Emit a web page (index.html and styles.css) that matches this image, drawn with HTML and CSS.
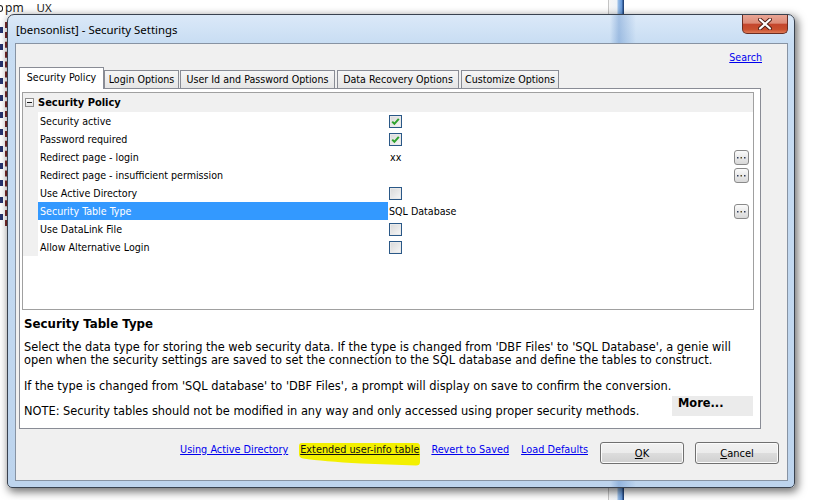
FILE: index.html
```html
<!DOCTYPE html>
<html>
<head>
<meta charset="utf-8">
<title>Security Settings</title>
<link rel="stylesheet" href="styles.css">
</head>
<body>
<div class="desk">
  <div class="bg-top"><span class="frag"></span><span class="pm">pm</span><span class="ux">UX</span></div>
  <div class="bg-left"></div>
  <div class="bg-bar bar-top"></div>
  <div class="bg-bar bar-bottom"></div>

  <div class="window">
    <div class="titlebar">
      <span class="title">[bensonlist] - Security Settings</span>
      <div class="close">
        <svg width="14" height="12" viewBox="0 0 14 12"><path d="M2 1.5 L12 10.5 M12 1.5 L2 10.5" stroke="#4a1a12" stroke-width="4" stroke-linecap="round"/><path d="M2 1.5 L12 10.5 M12 1.5 L2 10.5" stroke="#ffffff" stroke-width="2.2" stroke-linecap="round"/></svg>
      </div>
    </div>
    <div class="client">
      <div class="search-row"><a class="link">Search</a></div>
      <div class="tabs">
        <div class="tab active t1">Security Policy</div>
        <div class="tab t2">Login Options</div>
        <div class="tab t3">User Id and Password Options</div>
        <div class="tab t4">Data Recovery Options</div>
        <div class="tab t5">Customize Options</div>
      </div>
      <div class="panel">
        <div class="grid">
          <div class="cat"><span class="minus"></span><span class="cat-label">Security Policy</span></div>
          <div class="row"><div class="gutter"></div><div class="label">Security active</div><div class="value"><span class="cb"><svg width="11" height="11" viewBox="0 0 11 11"><path d="M2.2 5.6 L4.4 7.8 L8.8 2.8" stroke="#2ea22e" stroke-width="2" fill="none"/></svg></span></div></div>
          <div class="row"><div class="gutter"></div><div class="label">Password required</div><div class="value"><span class="cb"><svg width="11" height="11" viewBox="0 0 11 11"><path d="M2.2 5.6 L4.4 7.8 L8.8 2.8" stroke="#2ea22e" stroke-width="2" fill="none"/></svg></span></div></div>
          <div class="row"><div class="gutter"></div><div class="label">Redirect page - login</div><div class="value"><span class="val-text">xx</span><span class="ell"><svg width="9" height="3" viewBox="0 0 9 3"><rect x="0" y="1" width="1.5" height="1.5" fill="#2c3a5a"/><rect x="3.5" y="1" width="1.5" height="1.5" fill="#5a4a20"/><rect x="7" y="1" width="1.5" height="1.5" fill="#2c3a5a"/></svg></span></div></div>
          <div class="row"><div class="gutter"></div><div class="label">Redirect page - insufficient permission</div><div class="value"><span class="ell"><svg width="9" height="3" viewBox="0 0 9 3"><rect x="0" y="1" width="1.5" height="1.5" fill="#2c3a5a"/><rect x="3.5" y="1" width="1.5" height="1.5" fill="#5a4a20"/><rect x="7" y="1" width="1.5" height="1.5" fill="#2c3a5a"/></svg></span></div></div>
          <div class="row"><div class="gutter"></div><div class="label">Use Active Directory</div><div class="value"><span class="cb"></span></div></div>
          <div class="row"><div class="gutter"></div><div class="label sel">Security Table Type</div><div class="value"><span class="val-text sql">SQL Database</span><span class="ell"><svg width="9" height="3" viewBox="0 0 9 3"><rect x="0" y="1" width="1.5" height="1.5" fill="#2c3a5a"/><rect x="3.5" y="1" width="1.5" height="1.5" fill="#5a4a20"/><rect x="7" y="1" width="1.5" height="1.5" fill="#2c3a5a"/></svg></span></div></div>
          <div class="row"><div class="gutter"></div><div class="label">Use DataLink File</div><div class="value"><span class="cb"></span></div></div>
          <div class="row"><div class="gutter"></div><div class="label">Allow Alternative Login</div><div class="value"><span class="cb"></span></div></div>
        </div>
        <div class="desc">
          <h3 class="desc-title">Security Table Type</h3>
          <p class="p1">Select the data type for storing the web security data. If the type is changed from 'DBF Files' to 'SQL Database', a genie will<br>open when the security settings are saved to set the connection to the SQL database and define the tables to construct.</p>
          <p class="p2">If the type is changed from 'SQL database' to 'DBF Files', a prompt will display on save to confirm the conversion.</p>
          <div class="p3"><span class="note">NOTE: Security tables should not be modified in any way and only accessed using proper security methods.</span><span class="more">More...</span></div>
        </div>
      </div>
      <div class="footer">
        <div class="links">
          <a class="link">Using Active Directory</a>
          <a class="link hl"><svg class="marker" width="122" height="23" viewBox="0 0 122 23"><path d="M0 3 Q0 0 3 0 L118 0 Q121 0 121 4 L121 19 Q121 22.5 117 22.5 L62 20.5 Q24 18.5 4 15.5 Q0 14.8 0 11 Z" fill="#f3f000"/></svg><span class="hl-text">Extended user-info table</span></a>
          <a class="link">Revert to Saved</a>
          <a class="link">Load Defaults</a>
        </div>
        <button class="btn"><u>O</u>K</button>
        <button class="btn"><u>C</u>ancel</button>
      </div>
    </div>
  </div>
</div>
</body>
</html>
```

FILE: styles.css
```css
* { box-sizing: border-box; }

body {
  margin: 0;
  width: 817px;
  height: 500px;
  overflow: hidden;
  background: #ffffff;
  font-family: "DejaVu Sans Condensed", "Liberation Sans", sans-serif;
  font-size: 10.6px;
  color: #000;
}

.desk {
  position: relative;
  width: 817px;
  height: 500px;
  overflow: hidden;
  background: #fff;
}

/* background desktop fragments */
.bg-top {
  position: absolute;
  left: 0;
  top: 0;
  height: 15px;
  display: flex;
  align-items: center;
  font: 12px/14px "Noto Sans", sans-serif;
  color: #1c1c1c;
  white-space: nowrap;
}
.bg-top .frag {
  width: 3px;
  height: 7px;
  margin-top: 2px;
  border-radius: 0 3px 3px 0;
  border: 1.5px solid #1c1c1c;
  border-left: none;
}
.bg-top .pm { margin-left: 2px; }
.bg-top .ux { margin-left: 13px; font-size: 11.5px; }

.bg-left {
  position: absolute;
  left: 0;
  top: 22px;
  width: 7px;
  height: 204px;
  background: repeating-linear-gradient(180deg, transparent 0, transparent 5px, #26326e 5px, #26326e 11px, transparent 11px, transparent 17px);
  background-size: 3px 100%;
  background-repeat: no-repeat;
  border-right: 2px dashed #7a2a2a;
}

.bg-bar {
  position: absolute;
  left: 608px;
  width: 16px;
  background: linear-gradient(90deg, #c4c4c4 0, #c4c4c4 1px, #f6f6f6 1px, #eef3f8 9px, #9cc0e8 10px, #5f93d6 14px, #24467c 15px);
}
.bar-top { top: 0; height: 16px; }
.bar-bottom { top: 486px; height: 14px; }

/* window */
.window {
  position: absolute;
  left: 7px;
  top: 14px;
  width: 788px;
  height: 474px;
  border: 1px solid #39424f;
  border-radius: 7px 7px 5px 5px;
  padding: 0 6px 6px 7px;
  display: flex;
  flex-direction: column;
  background:
    linear-gradient(90deg, rgba(120,160,210,0) 602px, rgba(80,130,195,0.38) 611px, rgba(80,130,195,0.22) 618px, rgba(120,160,210,0) 628px),
    linear-gradient(180deg, #dbe9f8 0, #c8ddf3 28px, #bdd4ed 100%);
  box-shadow: 2px 3px 9px 1px rgba(0, 0, 0, 0.55);
}

.titlebar {
  height: 28px;
  display: flex;
  flex-shrink: 0;
}
.title {
  align-self: center;
  margin-left: 1px;
  font: 11.4px "Noto Sans", sans-serif;
  color: #000;
  white-space: nowrap;
}
.close {
  margin-left: auto;
  width: 46px;
  height: 19px;
  border: 1px solid #6a2d22;
  border-top: none;
  border-radius: 0 0 5px 5px;
  background: linear-gradient(180deg, #e9a595 0%, #dd8b77 45%, #c4462d 52%, #c9502f 80%, #df7a57 100%);
  display: flex;
  align-items: center;
  justify-content: center;
}

.client {
  height: 438px;
  background: #f0f0f0;
  border: 1px solid #8793a3;
  display: flex;
  flex-direction: column;
}

.search-row {
  height: 23px;
  padding: 7px 25px 0 0;
  display: flex;
  justify-content: flex-end;
  flex-shrink: 0;
}

.link {
  color: #0000ee;
  text-decoration: underline;
  line-height: 13px;
  white-space: nowrap;
}

/* tabs */
.tabs {
  height: 21px;
  display: flex;
  align-items: flex-end;
  flex-shrink: 0;
  position: relative;
  z-index: 1;
}
.tab {
  height: 18px;
  border: 1px solid #898c95;
  border-bottom: none;
  background: linear-gradient(180deg, #f6f6f6, #e5e5e5);
  display: flex;
  align-items: center;
  justify-content: center;
  white-space: nowrap;
  padding-bottom: 1px;
}
.tab.active {
  height: 22px;
  margin-bottom: -1px;
  background: #ffffff;
  padding-bottom: 4px;
}
.t1 { margin-left: 3px; width: 85px; }
.t2 { width: 75px; }
.t3 { margin-left: 1px; width: 155px; }
.t4 { margin-left: 2px; width: 122px; }
.t5 { margin-left: 2px; width: 98px; }

.panel {
  margin-left: 3px;
  width: 742px;
  height: 341px;
  border: 1px solid #898c95;
  background: #ffffff;
  display: flex;
  flex-direction: column;
  flex-shrink: 0;
}

/* property grid */
.grid {
  margin: 3px 6px 0 2px;
  height: 218px;
  border: 1px solid #a0a0a0;
  background: #ffffff;
  flex-shrink: 0;
}
.cat {
  height: 19px;
  background: #f0f0f0;
  display: flex;
  align-items: center;
}
.minus {
  position: relative;
  width: 9px;
  height: 9px;
  margin-left: 2px;
  border: 1px solid #8f8f8f;
  background: linear-gradient(180deg, #ffffff, #e2e2e2);
}
.minus::after {
  content: "";
  position: absolute;
  left: 1px;
  top: 3px;
  width: 5px;
  height: 1px;
  background: #1a1a1a;
}
.cat-label {
  margin-left: 4px;
  font-weight: bold;
  font-size: 11px;
  white-space: nowrap;
}

.row {
  display: grid;
  grid-template-columns: 15px 350px 1fr;
  height: 18px;
}
.gutter { background: #f0f0f0; }
.label {
  padding-left: 2px;
  line-height: 18px;
  white-space: nowrap;
}
.label.sel {
  background: #3399ff;
  color: #ffffff;
}
.value {
  display: flex;
  align-items: center;
  padding-left: 1px;
}
.val-text { margin-left: 1px; white-space: nowrap; }
.val-text.sql { margin-left: 0; }

.cb {
  width: 13px;
  height: 13px;
  border: 1px solid #2a5887;
  background: linear-gradient(135deg, #d8d8d8, #f7f7f7);
  box-shadow: inset 0 0 0 1px #e9e9e9;
  display: flex;
  align-items: center;
  justify-content: center;
}

.ell {
  margin-left: auto;
  margin-right: 4px;
  width: 15px;
  height: 15px;
  border: 1px solid #8a8a8a;
  border-radius: 3px;
  background: linear-gradient(180deg, #fbfbfb, #e9e9e9 50%, #d9d9d9);
  display: flex;
  align-items: center;
  justify-content: center;
}

/* description */
.desc {
  padding: 8px 0 0 4px;
  font-family: "DejaVu Sans", Verdana, sans-serif;
  font-size: 11.4px;
  line-height: 13px;
  color: #000;
}
.desc-title {
  margin: 0;
  font-size: 11.8px;
  line-height: 13px;
  font-weight: bold;
}
.desc p {
  margin: 0;
  white-space: nowrap;
}
.desc .p1 { margin-top: 10px; }
.desc .p2 { margin-top: 13px; }
.p3 {
  margin-top: 3px;
  display: flex;
  align-items: flex-end;
  white-space: nowrap;
}
.note { flex: 1; }
.more {
  width: 81px;
  height: 20px;
  margin-right: 7px;
  margin-bottom: 2px;
  padding: 1px 0 0 6px;
  background: #ebebeb;
  font-weight: bold;
}

/* footer */
.footer {
  margin-top: 13px;
  padding-right: 8px;
  display: flex;
  justify-content: flex-end;
  align-items: flex-start;
}
.links {
  display: flex;
  gap: 12px;
  margin-top: 1px;
  margin-right: 1px;
  font-size: 10.8px;
}
.hl {
  position: relative;
  z-index: 0;
  color: #111111;
}
.marker {
  position: absolute;
  left: -1px;
  top: 0;
  z-index: -1;
}
.btn {
  width: 84px;
  height: 22px;
  margin: 0 0 0 11px;
  padding: 0;
  border: 1px solid #707070;
  border-radius: 3px;
  background: linear-gradient(180deg, #f2f2f2 0%, #ebebeb 50%, #dddddd 50%, #cfcfcf 100%);
  box-shadow: inset 0 0 0 1px #fbfbfb;
  font-family: "DejaVu Sans Condensed", "Liberation Sans", sans-serif;
  font-size: 11px;
  color: #000;
}
```
